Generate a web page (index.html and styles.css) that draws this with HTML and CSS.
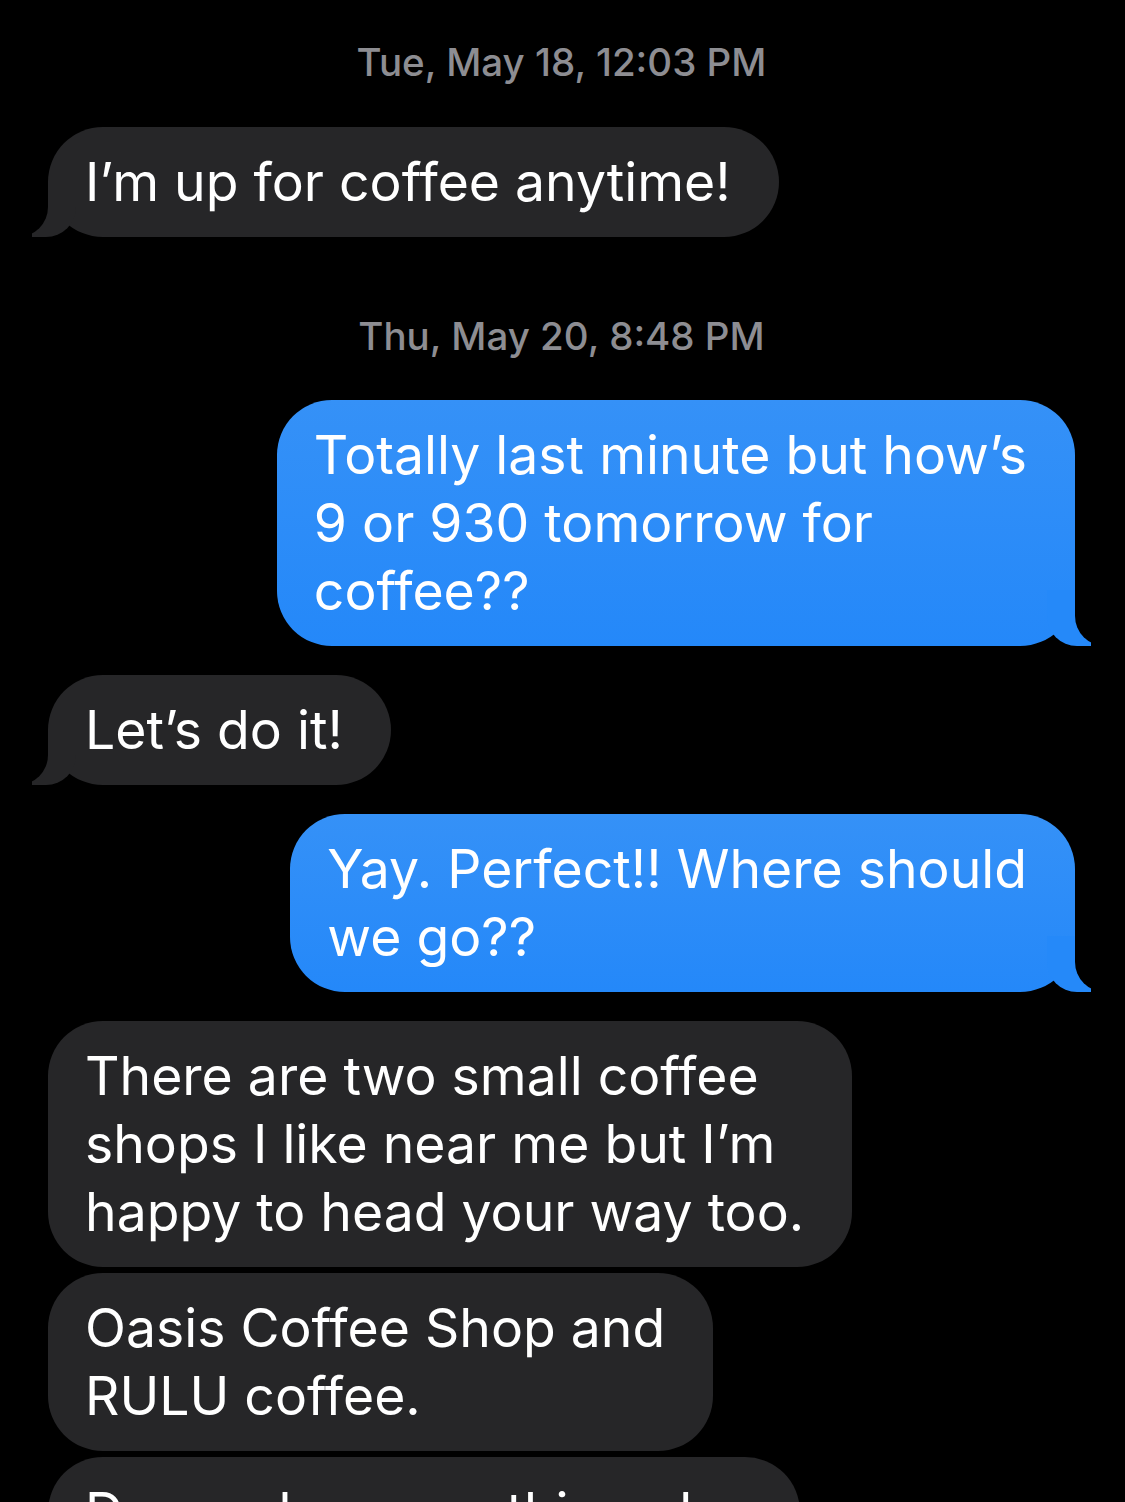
FILE: index.html
```html
<!DOCTYPE html>
<html lang="en">
<head>
    <meta charset="UTF-8">
    <meta name="viewport" content="width=device-width, initial-scale=1.0">
    <title>Messages</title>
    <link rel="stylesheet" href="styles.css">
</head>
<body>
    <div class="thread">
        <div class="stamp">Tue, May 18, 12:03 PM</div>
        <div class="bubble them tail">I’m up for coffee anytime!</div>

        <div class="stamp later">Thu, May 20, 8:48 PM</div>
        <div class="bubble me tail">Totally last minute but how’s<br>9 or 930 tomorrow for<br>coffee??</div>
        <div class="bubble them tail">Let’s do it!</div>
        <div class="bubble me tail">Yay. Perfect!! Where should<br>we go??</div>
        <div class="bubble them">There are two small coffee<br>shops I like near me but I’m<br>happy to head your way too.</div>
        <div class="bubble them same">Oasis Coffee Shop and<br>RULU coffee.</div>
        <div class="bubble them same">Do you have anything else<br>in mind?</div>
    </div>
</body>
</html>
```

FILE: styles.css
```css
body {
    margin: 0;
    background-color: #000;
    font-family: Inter, "Noto Sans", sans-serif;
    height: 1502px;
    overflow: hidden;
}

.thread {
    display: flex;
    flex-direction: column;
    padding: 40px 50px 0 48px;
}

.stamp {
    align-self: center;
    color: #8d8d92;
    font-size: 38.5px;
    font-weight: 500;
    line-height: 44px;
    margin-bottom: 43px;
}

.stamp.later {
    margin-top: 77px;
    margin-bottom: 42px;
}

.bubble {
    position: relative;
    z-index: 0;
    padding: 21px 48px 21px 37px;
    border-radius: 55px;
    font-size: 53.5px;
    line-height: 68px;
    color: #fff;
    white-space: nowrap;
}

.bubble + .bubble {
    margin-top: 29px;
}

.bubble.same {
    margin-top: 6px;
}

.them {
    align-self: flex-start;
    background-color: #262628;
}

.me {
    align-self: flex-end;
    background: linear-gradient(#3591f7, #2488f9);
}

/* bubble tails */
.tail::before,
.tail::after {
    content: "";
    position: absolute;
    bottom: 0;
    z-index: -1;
}

.them.tail::before {
    left: -16px;
    width: 44px;
    height: 56px;
    background-color: #262628;
    border-bottom-right-radius: 30px;
}

.them.tail::after {
    left: -30px;
    width: 30px;
    height: 60px;
    background-color: #000;
    border-bottom-right-radius: 30px;
}

.me.tail::before {
    right: -16px;
    width: 44px;
    height: 56px;
    background-color: #2589f9;
    border-bottom-left-radius: 30px;
}

.me.tail::after {
    right: -30px;
    width: 30px;
    height: 60px;
    background-color: #000;
    border-bottom-left-radius: 30px;
}
```
